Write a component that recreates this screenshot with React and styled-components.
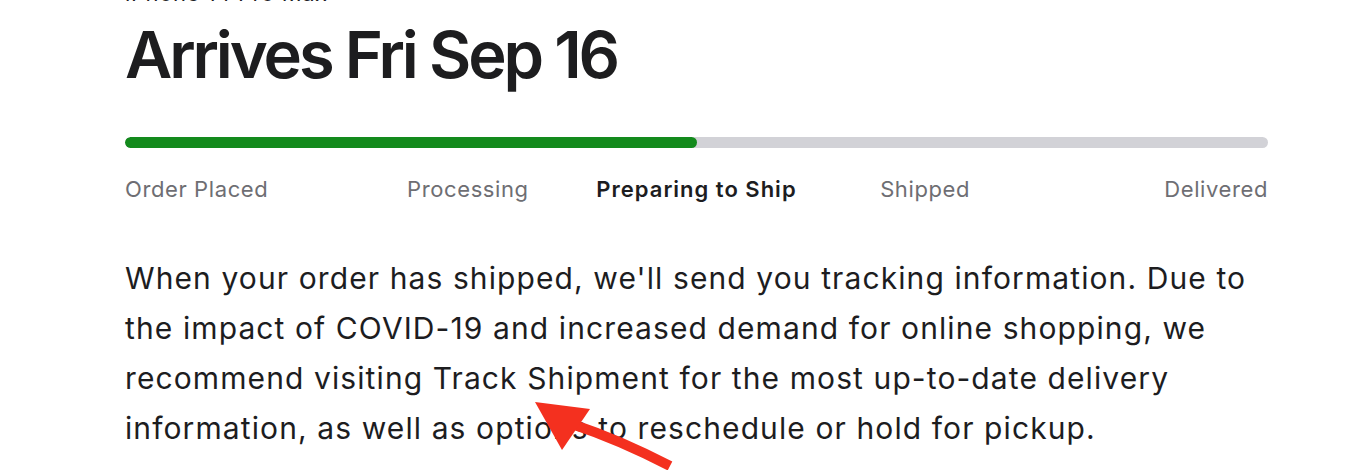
import React from 'react'
import styled, { createGlobalStyle } from 'styled-components'

const GlobalStyle = createGlobalStyle`
	html, body {
		margin: 0;
		padding: 0;
		background: #ffffff;
	}
	body {
		font-family: Inter, "Noto Sans", "Liberation Sans", sans-serif;
		color: #1d1d1f;
		overflow: hidden;
	}
`

const Page = styled.div`
	position: relative;
	width: 1366px;
	height: 470px;
	overflow: hidden;
`

const Content = styled.div`
	width: 1143px;
	margin-left: 125px;
	display: flex;
	flex-direction: column;
`

const Product = styled.div`
	margin-top: -22px;
	font-size: 22px;
	line-height: 30px;
	letter-spacing: 0.6px;
	color: #1d1d1f;
`

const Title = styled.h1`
	margin: 0;
	margin-top: 6px;
	font-size: 65px;
	line-height: 82px;
	font-weight: 600;
	letter-spacing: -3.1px;
`

const Track = styled.div`
	margin-top: 41px;
	height: 11px;
	border-radius: 6px;
	background: #d2d2d7;
	overflow: hidden;
`

const Fill = styled.div`
	height: 100%;
	border-radius: 6px;
	background: #138a1c;
`

const Steps = styled.div`
	margin-top: 27px;
	display: grid;
	grid-template-columns: repeat(5, 1fr);
	font-size: 22px;
	line-height: 28px;
`

const Step = styled.div`
	justify-self: ${p => p.$align};
	white-space: nowrap;
	color: ${p => (p.$active ? '#1d1d1f' : '#6e6e73')};
	font-weight: ${p => (p.$active ? 600 : 400)};
	letter-spacing: ${p => (p.$active ? '1px' : '0.6px')};
`

const Note = styled.p`
	margin: 50px 0 0;
	font-size: 30px;
	line-height: 50px;
	letter-spacing: 1.1px;
	color: #1d1d1f;
`

const Arrow = styled.svg`
	position: absolute;
	left: 0;
	top: 0;
	pointer-events: none;
`

const steps = ['Order Placed', 'Processing', 'Preparing to Ship', 'Shipped', 'Delivered']
const current = 2

export default function App() {
	return (
		<Page>
			<GlobalStyle />
			<Content>
				<Product>iPhone 14 Pro Max</Product>
				<Title>Arrives Fri Sep 16</Title>
				<Track>
					<Fill style={{ width: '50%' }} />
				</Track>
				<Steps>
					{steps.map((s, i) => (
						<Step
							key={s}
							$active={i === current}
							$align={i === 0 ? 'start' : i === steps.length - 1 ? 'end' : 'center'}
						>
							{s}
						</Step>
					))}
				</Steps>
				<Note>
					When your order has shipped, we'll send you tracking information. Due to the impact of COVID-19 and increased demand for online shopping, we recommend visiting Track Shipment for the most up-to-date delivery information, as well as options to reschedule or hold for pickup.
				</Note>
			</Content>
			<Arrow width="1366" height="470" viewBox="0 0 1366 470">
				<path d="M670 466 Q 620 440 572 424" fill="none" stroke="#f4301f" strokeWidth="10" strokeLinecap="butt" />
				<polygon points="535,402 590,409 562,450" fill="#f4301f" />
			</Arrow>
		</Page>
	)
}
